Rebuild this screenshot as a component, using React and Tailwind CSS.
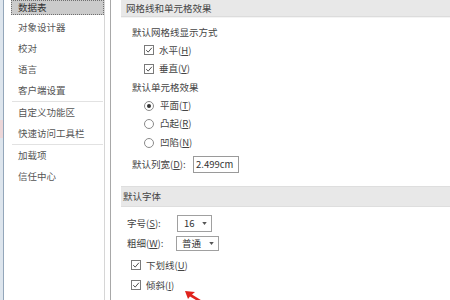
import React from "react";

const Check = () => (
  <span className="flex h-[10px] w-[10px] shrink-0 items-center justify-center border border-[#7a7a7a] bg-white">
    <svg viewBox="0 0 10 10" className="h-[8px] w-[8px]">
      <path d="M1.5 5.2 L4 7.6 L8.6 2.2" fill="none" stroke="#333" strokeWidth="1.1" />
    </svg>
  </span>
);

const Radio = ({ on }) => (
  <span className="flex h-[10px] w-[10px] shrink-0 items-center justify-center rounded-full border border-[#8a8a8a] bg-white">
    {on && <span className="h-[4px] w-[4px] rounded-full bg-[#333]" />}
  </span>
);

const Caret = () => (
  <svg viewBox="0 0 6 4" className="h-[3px] w-[5px]">
    <path d="M0 0 H6 L3 4 Z" fill="#555" />
  </svg>
);

const navTop = ["对象设计器", "校对", "语言", "客户端设置"];
const navMid = ["自定义功能区", "快速访问工具栏"];
const navBot = ["加载项", "信任中心"];

const NavItem = ({ label }) => (
  <div className="flex h-[21px] items-center pl-[7px]">{label}</div>
);

export default function App() {
  return (
    <div className="relative flex h-[300px] w-[450px] overflow-hidden bg-white font-['Noto_Sans_CJK_SC',sans-serif] text-[9.5px] text-[#444]">
      {/* left window edge */}
      <div className="flex w-[4px] flex-col border-r border-[#93a6ba] bg-[#dde5ed]">
        <div className="h-[120px]" />
        <div className="h-[18px] bg-[#ecd6d8]" />
      </div>

      {/* nav list */}
      <nav className="w-[101px] border-r border-[#d6d6d6] pl-[7px] text-[#555]">
        <div className="flex h-[15px] items-center border border-dotted border-[#6f6f6f] bg-[#cbcbcb] pl-[6px] text-[#333]">
          数据表
        </div>
        <div className="h-[1.5px]" />
        {navTop.map((l) => (
          <NavItem key={l} label={l} />
        ))}
        <div className="mx-[1px] h-px bg-[#e2e2e2]" />
        {navMid.map((l) => (
          <NavItem key={l} label={l} />
        ))}
        <div className="mx-[1px] h-px bg-[#e2e2e2]" />
        {navBot.map((l) => (
          <NavItem key={l} label={l} />
        ))}
      </nav>

      <div className="w-[5px]" />

      {/* main options */}
      <main className="flex-1 border-l border-[#a8a8a8] pl-[10px]">
        <div className="flex h-[17px] items-center border-b border-[#dcdcdc] bg-[#e8e8e8] pl-[5px]">
          网格线和单元格效果
        </div>
        <div className="h-px bg-[#f4f4f4]" />
        <div className="pl-[11px]">
          <div className="h-[5px]" />
          <div className="flex h-[18px] items-center">默认网格线显示方式</div>
          <div className="flex h-[18px] items-center gap-[5px] pl-[12px]">
            <Check />
            <span>水平(<u>H</u>)</span>
          </div>
          <div className="flex h-[19px] items-center gap-[5px] pl-[12px]">
            <Check />
            <span>垂直(<u>V</u>)</span>
          </div>
          <div className="flex h-[19px] items-center">默认单元格效果</div>
          <div className="flex h-[17px] items-center gap-[6px] pl-[12px]">
            <Radio on />
            <span>平面(<u>T</u>)</span>
          </div>
          <div className="flex h-[19px] items-center gap-[6px] pl-[12px]">
            <Radio />
            <span>凸起(<u>R</u>)</span>
          </div>
          <div className="flex h-[19px] items-center gap-[6px] pl-[12px]">
            <Radio />
            <span>凹陷(<u>N</u>)</span>
          </div>
          <div className="flex h-[24px] items-center">
            <span className="w-[61px]">默认列宽(<u>D</u>):</span>
            <span className="flex h-[17px] w-[46px] items-center border border-[#9a9a9a] pl-[2px] text-[#333]">
              2.499cm
            </span>
          </div>
        </div>
        <div className="h-[10px]" />
        <div className="flex h-[21px] items-center border-y border-[#dedede] bg-[#e8e8e8] pl-[2px]">
          默认字体
        </div>
        <div className="pl-[6px]">
          <div className="h-[7px]" />
          <div className="flex h-[19px] items-center">
            <span className="w-[50px]">字号(<u>S</u>):</span>
            <span className="flex h-[17px] w-[35px] items-center justify-between border border-[#a0a0a0] pl-[6px] pr-[4px] text-[#333]">
              16
              <Caret />
            </span>
          </div>
          <div className="flex h-[20px] items-center">
            <span className="w-[49px]">粗细(<u>W</u>):</span>
            <span className="flex h-[15px] w-[43px] items-center justify-between border border-[#a0a0a0] pl-[5px] pr-[4px] text-[#333]">
              普通
              <Caret />
            </span>
          </div>
          <div className="h-[2px]" />
          <div className="flex h-[20px] items-center gap-[5px] pl-[4px]">
            <Check />
            <span>下划线(<u>U</u>)</span>
          </div>
          <div className="flex h-[20px] items-center gap-[5px] pl-[4px]">
            <Check />
            <span>倾斜(<u>I</u>)</span>
          </div>
        </div>
      </main>

      {/* red pointer arrow */}
      <svg
        viewBox="0 0 24 14"
        className="absolute left-[184px] top-[289px] h-[14px] w-[24px]"
      >
        <polygon points="1,2 11,3 8,5.5 20,13 17,14 6,7.5 4,10" fill="#e0231c" />
      </svg>
    </div>
  );
}
